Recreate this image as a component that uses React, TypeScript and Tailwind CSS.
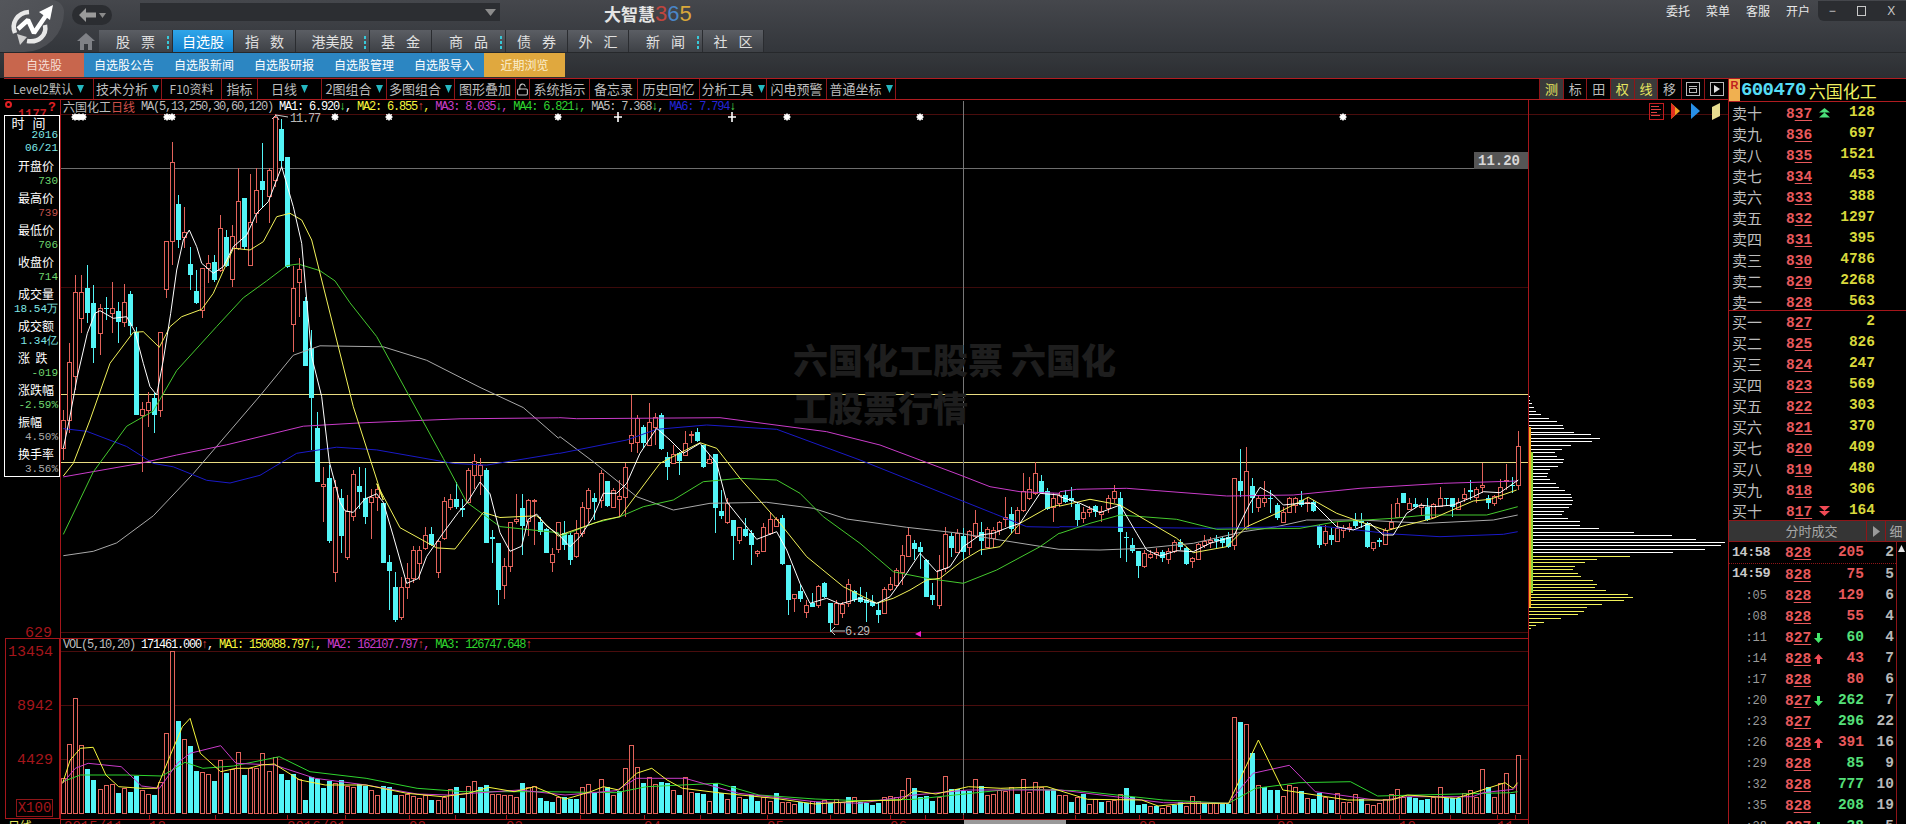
import { LockOpen } from "lucide-react";

type Pt = [number, number];
const pts = (ox: number, oy: number, sx: number, sy: number, a: number[]): Pt[] => {
  const out: Pt[] = [];
  for (let i = 0; i < a.length; i += 2) out.push([ox + a[i] / sx, oy + a[i + 1] / sy]);
  return out;
};
const line = (...parts: Pt[][]) => parts.flat().map((p) => `${p[0].toFixed(1)},${p[1].toFixed(1)}`).join(" ");

const Z3 = (a: number[]) => pts(0, 100, 3, 3, a);
const Z7 = (a: number[]) => pts(60, 100, 3, 2.958, a);
const Z8 = (a: number[]) => pts(560, 320, 3, 3, a);
const Z9 = (a: number[]) => pts(1060, 400, 3, 3, a);
const V1 = (a: number[]) => pts(60, 640, 1.96, 3, a);
const V2 = (a: number[]) => pts(860, 640, 1.845, 3, a);

const priceLines = [
  { c: "#a9a9a9", p: line(
    Z7([10,1348,100,1335,170,1310,280,1230,400,1105,600,875,700,755,780,727,970,730,1100,770,1260,850,1390,910,1495,1000]),
    Z8([0,350,100,425,230,530,340,570,450,550,620,547,760,565,860,597,1040,622,1200,640,1320,660,1497,688]),
    Z9([0,448,120,450,250,445,400,430,550,395,650,380,740,360,900,360,1100,370,1300,360,1373,345])) },
  { c: "#1a1ac8", p: line(
    Z7([10,972,80,980,200,1025,280,1075,340,1085,440,1125,510,1133,600,1110,710,1045,830,1027,950,1035,1180,1075,1280,1080,1495,1045]),
    Z8([0,400,200,360,290,328,440,315,650,328,900,420,1200,540,1300,580,1400,620,1497,622]),
    Z9([0,380,460,385,780,378,1000,402,1140,410,1330,403,1373,395])) },
  { c: "#c93cc9", p: line(
    Z7([10,1115,240,1075,350,1050,500,1020,730,965,900,955,1200,943,1495,940]),
    Z8([0,293,50,296,480,293,800,335,960,375,1200,465,1290,500,1380,515,1497,520]),
    Z9([0,275,50,268,200,265,500,288,700,285,900,265,1150,250,1373,243])) },
  { c: "#45c92e", p: line(
    Z7([10,1285,100,1100,200,965,280,920,350,800,470,670,550,585,620,535,680,490,715,485,780,505,825,535,870,600,950,700,1050,880,1150,1060,1220,1190,1320,1262,1495,1280]),
    Z8([0,650,100,610,180,590,250,560,340,540,430,485,540,475,650,480,720,520,790,590,900,670,1000,755,1100,775,1210,790,1310,750,1440,680,1497,640]),
    Z9([0,400,90,370,180,345,350,358,470,388,720,385,830,365,1000,355,1100,345,1280,345,1373,320])) },
  { c: "#f2f25a", p: line(
    Z3([190,1128,220,1090,270,960,330,790,400,697,430,695,478,742,510,680,545,650,605,628,640,580,700,445,750,450,790,425,830,350,870,340,905,360,935,420,980,600,1060,920,1150,1200]),
    Z7([950,1135,1020,1265,1130,1325,1185,1328,1270,1220,1320,1235,1430,1230,1495,1290]),
    Z8([0,645,130,600,180,590,240,510,300,430,420,368,470,385,540,475,660,610,740,710,850,800,950,850,1000,835,1050,810,1100,780,1140,775,1210,720,1260,690,1320,680,1380,610,1460,565,1497,555]),
    Z9([0,318,90,298,180,315,350,415,400,458,500,440,560,380,650,340,745,292,830,340,900,365,980,392,1040,375,1120,355,1200,320,1240,303,1290,298,1370,270])) },
  { c: "#ffffff", p: line(
    Z3([190,1045,208,960,232,830,262,700,285,640,300,632,340,655,380,650,405,695,430,790,450,860,470,885,490,780,512,640,530,510,550,420,568,390,590,440,605,490,640,520,670,500,700,440,740,405,770,340,805,305,845,200,880,320,905,430,935,770,965,890]),
    Z7([808,1070,840,1190,855,1215,880,1220,915,1180,950,1165,970,1190,1000,1290,1040,1430,1075,1415,1100,1350,1150,1280,1195,1220,1222,1190,1260,1130,1290,1165,1320,1280,1350,1335,1385,1320,1405,1240,1430,1225,1460,1260,1495,1285]),
    Z8([30,680,60,650,100,590,130,520,170,520,200,490,240,400,290,325,330,360,370,400,420,370,470,430,500,545,540,595,590,658,650,635,680,690,720,790,750,850,800,835,840,852,900,835,950,850,990,830,1040,760,1080,700,1130,755,1170,740,1210,680,1260,645,1300,640,1350,620,1380,610,1440,520,1497,525]),
    Z9([0,290,60,310,120,338,180,315,230,400,260,450,300,468,350,452,400,455,450,430,520,410,570,310,600,262,640,285,670,315,720,310,760,310,830,380,880,390,930,370,970,405,1000,405,1040,340,1080,315,1120,320,1180,315,1240,290,1270,275,1320,278,1375,240])) },
];

const volLines = [
  { c: "#2fd52f", p: line(
    V1([5,425,40,405,130,405,200,408,245,367,280,385,340,378,430,350,490,395,600,415,700,445,790,455,950,455,1090,458,1150,440,1290,430,1370,465,1480,477,1568,482]),
    V2([100,478,280,447,400,452,560,480,680,490,730,445,810,428,905,425,955,468,1200,458,1213,455])) },
  { c: "#c93cc9", p: line(
    V1([5,430,30,385,55,370,120,380,160,438,195,445,230,370,255,340,315,317,345,370,420,375,500,415,600,435,700,462,760,465,900,450,990,465,1090,452,1130,415,1225,415,1330,460,1480,485,1568,490]),
    V2([100,465,200,450,370,450,560,488,680,490,725,400,792,376,840,455,960,482,1010,470,1130,470,1150,458,1205,448,1213,435])) },
  { c: "#f6f63c", p: line(
    V1([5,430,20,360,40,325,65,322,90,405,115,440,160,445,190,445,215,350,240,260,255,235,275,340,315,395,345,385,370,385,395,375,420,372,470,420,520,435,600,435,680,460,750,470,800,460,840,442,890,455,930,440,990,478,1040,455,1065,440,1095,450,1130,400,1160,385,1190,420,1220,445,1300,460,1400,475,1480,492,1568,483]),
    V2([75,480,100,452,140,462,200,440,260,445,345,440,420,478,520,480,550,498,600,490,680,490,735,300,780,450,900,480,980,480,1010,465,1100,475,1190,428,1205,445,1213,428])) },
];

// [1=red 0=cyan, body top, body bottom, high, low]
const C: [number, number, number, number, number][] = [
  [1,420,448,410,460],[1,362,420,343,433],[1,292,376,275,390],[1,292,318,275,333],[0,288,313,265,323],[0,303,348,285,363],
  [1,308,333,304,355],[0,308,309,297,320],[1,308,313,282,333],[0,311,322,302,343],[1,302,322,284,327],[0,294,326,291,335],
  [0,332,415,327,415],[1,409,415,402,472],[1,402,410,392,427],[0,398,415,393,433],[1,332,410,332,417],[1,241,289,241,298],
  [1,162,241,142,265],[0,204,240,195,248],[1,232,237,207,248],[0,264,275,247,290],[0,291,303,270,304],[1,268,310,268,318],
  [1,263,268,255,283],[0,262,280,255,282],[1,228,270,215,272],[0,237,266,230,267],[1,236,279,225,287],[1,201,248,168,250],
  [0,198,247,198,250],[1,222,265,174,266],[1,190,213,168,223],[0,181,190,143,207],[1,170,196,168,223],[1,117,180,114,187],
  [0,129,161,119,167],[0,157,267,157,268],[1,288,324,266,352],[1,269,282,258,317],[0,301,366,297,366],[0,348,398,330,450],
  [0,428,482,412,482],[1,484,486,467,522],[0,478,541,465,543],[1,487,572,480,582],[0,498,536,489,553],[1,511,557,495,560],
  [1,474,516,470,521],[0,486,492,467,509],[0,498,517,468,524],[1,497,502,489,539],[1,489,497,484,511],[0,503,563,503,563],
  [0,562,571,555,610],[0,587,620,572,622],[1,587,617,577,620],[1,578,587,563,599],[1,550,578,546,583],[1,550,563,546,580],
  [1,535,548,527,550],[0,534,545,527,546],[1,541,572,539,578],[1,501,538,497,540],[1,499,507,494,510],[0,499,507,482,509],
  [0,508,510,499,517],[1,470,502,468,504],[1,461,475,454,489],[1,465,475,458,495],[0,470,543,468,543],[0,537,539,530,563],
  [0,543,590,543,605],[1,566,585,558,599],[1,522,566,522,572],[1,519,521,494,524],[0,508,526,494,555],[1,500,521,499,536],
  [1,500,501,499,545],[0,522,532,517,535],[0,529,553,528,553],[1,554,562,548,572],[1,522,549,522,553],[0,533,545,521,550],
  [0,535,560,533,565],[1,533,556,520,558],[1,507,533,502,537],[1,490,508,488,523],[0,498,502,493,520],[1,473,500,470,508],
  [0,481,506,481,507],[1,490,507,488,508],[1,496,499,480,517],[1,467,497,463,517],[1,435,443,395,452],[1,418,442,415,453],
  [0,427,443,425,448],[1,422,445,403,446],[1,417,427,413,445],[0,415,449,413,450],[0,457,467,452,480],[1,454,463,445,463],
  [0,453,461,452,475],[1,443,455,431,455],[1,434,435,431,443],[0,432,441,428,442],[0,445,467,445,468],[1,459,463,455,464],
  [0,454,508,454,533],[0,511,516,490,519],[1,503,522,498,524],[0,520,536,520,560],[1,527,540,527,544],[0,529,536,518,537],
  [0,533,545,530,565],[1,551,553,550,557],[1,527,551,523,552],[1,519,533,512,535],[1,519,526,517,527],[0,518,564,515,565],
  [0,565,600,565,615],[1,594,598,594,612],[0,591,599,585,602],[1,605,612,600,618],[0,603,607,593,607],[1,586,605,585,608],
  [0,583,597,582,598],[0,603,623,603,632],[1,603,624,600,625],[1,604,613,602,618],[1,584,603,579,607],[0,591,600,590,602],
  [0,597,602,587,603],[0,600,603,592,622],[0,602,606,595,607],[0,610,615,602,623],[1,589,613,587,613],[1,584,589,577,591],
  [1,570,585,568,587],[1,555,572,545,585],[1,535,556,527,557],[0,543,549,540,560],[0,547,552,542,569],[0,560,597,559,597],
  [0,595,600,583,605],[1,570,605,555,609],[1,534,568,527,572],[0,536,548,533,557],[1,533,552,529,553],[0,536,552,528,560],
  [1,531,547,530,555],[1,523,536,510,538],[0,532,541,522,555],[1,529,547,527,548],[1,530,538,527,548],[1,522,530,521,535],
  [1,517,519,497,527],[0,514,529,507,533],[1,510,533,507,534],[1,491,510,473,512],[1,489,498,477,500],[1,473,493,462,495],
  [0,481,493,475,493],[0,491,509,488,510],[1,498,507,493,522],[1,495,503,493,507],[0,495,502,490,503],[0,498,501,487,507],
  [0,504,520,503,526],[1,512,518,507,523],[1,509,512,506,517],[0,506,512,505,517],[1,511,514,506,522],[1,498,508,495,513],
  [1,491,498,485,503],[0,498,532,492,558],[0,537,538,532,562],[0,545,551,538,553],[0,551,566,551,578],[1,553,566,550,568],
  [1,554,557,550,559],[1,552,554,548,559],[0,552,558,550,562],[1,551,559,548,564],[1,542,551,540,553],[0,542,547,539,550],
  [0,548,564,547,565],[1,558,561,557,568],[1,544,559,543,560],[1,541,545,535,548],[1,540,542,537,548],[0,539,541,535,548],
  [0,538,543,537,548],[0,537,547,532,548],[1,478,545,478,550],[0,481,491,449,497],[1,471,528,447,530],[0,486,498,478,513],
  [1,498,507,495,512],[1,498,502,481,507],[0,498,499,490,513],[0,505,518,503,520],[1,512,522,507,523],[1,498,512,497,513],
  [1,498,505,497,513],[0,500,505,491,507],[1,502,503,497,512],[0,502,511,500,512],[0,526,545,525,548],[1,531,543,525,546],
  [0,535,540,528,545],[1,528,541,522,542],[1,528,530,525,538],[1,527,528,523,532],[0,520,526,513,528],[0,521,523,513,528],
  [0,523,547,522,548],[1,542,548,542,551],[0,540,542,538,547],[1,530,544,528,545],[1,522,528,504,530],[1,503,517,498,518],
  [0,493,503,493,503],[1,503,509,498,510],[0,504,507,498,508],[1,505,507,503,515],[0,507,520,498,521],[1,504,517,503,518],
  [1,498,506,487,507],[0,498,499,498,506],[0,498,507,498,517],[1,502,509,498,510],[1,494,498,488,502],[0,490,492,480,500],
  [1,489,497,487,503],[1,485,487,463,493],[0,498,503,495,509],[1,496,503,495,506],[1,487,498,479,500],[1,480,481,464,490],
  [0,485,486,477,493],[1,446,485,431,490],
];

const volTop = [778,744,698,745,-769,-780,789,785,784,-793,788,-792,-776,790,794,-795,782,733,651,-721,739,-746,-771,772,774,-781,760,-773,769,752,-775,768,768,753,771,757,-774,-780,-774,779,-800,-777,-779,-788,-781,783,-780,786,787,-784,-786,790,795,-786,-787,-795,795,794,796,798,795,-800,800,797,789,-787,-798,786,781,-787,-785,794];
const volZoom = [
  462,465,465,470,-430,440,438,-475,-482,-487,470,-472,-478,-478,440,432,-460,418,-440,465,
  -452,385,316,382,-430,412,433,-425,-430,450,-465,412,457,-458,-462,484,-430,-458,478,-438,472,-478,-465,-483,
  472,482,-460,487,487,493,-487,-490,483,-487,480,-490,478,485,-472,470,
  -485,-490,-495,-490,472,468,472,450,415,-445,-470,-468,-483,470,408,-448,-448,-452,-453,418,
  -438,465,462,450,452,440,-462,418,455,427,442,-450,-448,465,465,-487,470,-463,492,478,
  -485,482,480,462,-445,-470,-495,-491,498,-497,505,498,-495,-485,497,468,482,-490,490,488,
  -492,-492,232,-246,253,-338,435,-442,-450,-450,468,435,442,-452,475,-477,-458,470,-480,460,
  485,487,463,-478,492,495,490,478,462,448,470,-470,-475,-480,-478,470,442,-475,-475,-475,460,450,470,388,-442,472,430,400,-462,346,
];
const vols = [
  ...volTop,
  ...volZoom.map((y) => (y < 0 ? -(640 + -y / 3) : 640 + y / 3)),
].slice(0, 242);

const candleX = (i: number) => Math.round(63.3 + 6.036 * i) + 0.5;

const stars = [75, 79, 83, 167, 172, 335, 389, 558, 787, 920, 1343];
const crosses = [618, 732];
const dateLabels: [number, string][] = [[64, "2015/11"], [149, "12"], [287, "2016/01"], [409, "02"], [506, "03"], [644, "04"], [767, "05"], [890, "06"], [1139, "08"], [1277, "09"], [1399, "10"], [1497, "11"]];
const dateTicks = [149, 215, 287, 345, 409, 455, 506, 580, 644, 700, 767, 830, 890, 925, 963, 1075, 1139, 1200, 1277, 1340, 1399, 1450, 1497, 1515];

function Chart() {
  return (
    <svg width={1467} height={724} viewBox="61 100 1467 724" className="block">
      <g shapeRendering="crispEdges">
        <line x1={61} x2={1528} y1={114.5} y2={114.5} stroke="#4a0d0d" />
        <line x1={61} x2={1528} y1={287.5} y2={287.5} stroke="#3c0a0a" />
        <line x1={61} x2={1528} y1={632.5} y2={632.5} stroke="#4a0d0d" />
        <line x1={61} x2={1528} y1={651.5} y2={651.5} stroke="#4a0d0d" />
        <line x1={61} x2={1528} y1={705.5} y2={705.5} stroke="#4a0d0d" />
        <line x1={61} x2={1528} y1={759.5} y2={759.5} stroke="#4a0d0d" />
      </g>
      <g shapeRendering="crispEdges">
        <line x1={61} x2={1528} y1={168.5} y2={168.5} stroke="#6e6e6e" />
        <line x1={61} x2={1528} y1={394.5} y2={394.5} stroke="#e9dc82" />
        <line x1={61} x2={1528} y1={462.5} y2={462.5} stroke="#e9dc82" />
        <line x1={963.5} x2={963.5} y1={101} y2={819} stroke="#777" />
        <line x1={61} x2={1528} y1={638.5} y2={638.5} stroke="#a5161b" />
        <line x1={61} x2={1528} y1={819.5} y2={819.5} stroke="#a5161b" />
        {dateTicks.map((x) => <line key={x} x1={x + 0.5} x2={x + 0.5} y1={815} y2={819} stroke="#a5161b" />)}
      </g>
      <g shapeRendering="crispEdges">
        {C.map((c, i) => {
          const x = candleX(i);
          const col = c[0] ? "#e2635b" : "#53f5f7";
          return (
            <g key={i}>
              <line x1={x} x2={x} y1={c[3]} y2={c[4]} stroke={col} />
              {c[0] ? (
                <rect x={x - 2} y={c[1] + 0.5} width={4} height={Math.max(c[2] - c[1], 1)} fill="#000" stroke={col} />
              ) : (
                <rect x={x - 2.5} y={c[1]} width={5} height={Math.max(c[2] - c[1], 1)} fill={col} />
              )}
            </g>
          );
        })}
        {vols.map((v, i) => {
          const x = candleX(i);
          const top = Math.round(Math.abs(v));
          return v > 0 ? (
            <rect key={i} x={x - 2} y={top + 0.5} width={4} height={813 - top} fill="#000" stroke="#e2635b" />
          ) : (
            <rect key={i} x={x - 2.5} y={top} width={5} height={813 - top} fill="#53f5f7" />
          );
        })}
      </g>
      <g fill="none" strokeLinejoin="round">
        {priceLines.map((l) => <polyline key={l.c} points={l.p} stroke={l.c} strokeWidth={1} />)}
        {volLines.map((l) => <polyline key={l.c} points={l.p} stroke={l.c} strokeWidth={1} />)}
      </g>
      <g fill="#fff">
        {stars.map((x) => (
          <g key={x}>
            <circle cx={x} cy={117} r={3} />
            <path d={`M${x - 4} 117H${x + 4}M${x} 113V121M${x - 3} 114L${x + 3} 120M${x + 3} 114L${x - 3} 120`} stroke="#fff" strokeWidth={0.8} />
          </g>
        ))}
        {crosses.map((x) => <path key={x} d={`M${x - 4} 117H${x + 4}M${x} 112V122`} stroke="#fff" strokeWidth={1.6} />)}
      </g>
      <path d="M288 117L276 115L272 119M276 115L279 120" stroke="#c9c9c9" fill="none" />
      <text x={290} y={122} fill="#b9b9b9" fontFamily="'Liberation Mono', monospace" fontSize={12} letterSpacing={-1.2}>11.77</text>
      <path d="M845 631H831M835 627L831 631L835 635" stroke="#c9c9c9" fill="none" />
      <text x={845} y={635} fill="#b9b9b9" fontFamily="'Liberation Mono', monospace" fontSize={12} letterSpacing={-1.2}>6.29</text>
      <polygon points="915,634 921,631 921,637" fill="#ee22cc" />
      <rect x={1474} y={152} width={54} height={17} fill="#555" />
      <text x={1478} y={165} fill="#d8d8d8" fontFamily="'Liberation Mono', monospace" fontSize={14} fontWeight={700}>11.20</text>
      <g fontFamily="'Liberation Mono', monospace" fontSize={14} fill="#a5161b">
        {dateLabels.map(([x, t]) => <text key={t} x={x} y={831}>{t}</text>)}
      </g>
      <rect x={964} y={820} width={102} height={4} fill="#999" />
    </svg>
  );
}

const profile: [number, number][] = [
  [48,390],[60,390],[70,395],[82,402],[92,408],[103,422],[113,447],[124,470],[134,489],[144,491],[155,522],[163,573],[175,600],[184,576],[196,513],[206,486],[217,466],[227,471],[238,491],[247,489],[259,474],[268,450],[278,444],[289,441],[298,450],[310,468],[320,477],[331,495],[341,513],[352,516],[361,519],[372,516],[382,507],[392,492],[403,486],[413,504],[424,540],[434,540],[445,597],[455,702],[466,816],[476,888],[487,975],[496,963],[508,915],[517,819],
  [527,690],[538,591],[547,555],[559,525],[568,519],[579,534],[589,543],[600,579],[611,591],[622,585],[631,618],[641,684],[652,699],[661,672],[672,606],[682,561],[694,552],[703,534],[715,483],[725,432],[736,408],[745,393],
];

function Profile() {
  return (
    <svg width={199} height={724} viewBox="1529 100 199 724" className="block">
      <g shapeRendering="crispEdges">
        <line x1={1529} x2={1728} y1={114.5} y2={114.5} stroke="#4a0d0d" />
        {profile.map(([y, x], i) => (
          <line key={y} x1={1529} x2={1400 + x / 3} y1={Math.round(380 + y / 3) + 0.5} y2={Math.round(380 + y / 3) + 0.5} stroke={i < 46 ? "#ffffff" : "#f2f25a"} />
        ))}
        <rect x={1529} y={427} width={2} height={180} fill="#f5a81c" />
        <rect x={1531} y={452} width={2} height={141} fill="#8fd83a" />
        <rect x={1649.5} y={103.5} width={14} height={16} fill="none" stroke="#c01c20" />
        <path d="M1651 106.5h8M1651 109.5h10M1651 112.5h6M1651 115.5h9" stroke="#e04040" />
      </g>
      <polygon points="1671,103 1680,111 1671,119" fill="#f0a020" />
      <polygon points="1671,103 1675,107 1675,115 1671,119" fill="#e03020" />
      <polygon points="1691,103 1700,111 1691,119" fill="#2890e8" />
      <polygon points="1712,107 1720,103 1720,116 1712,120" fill="#e8dc90" />
    </svg>
  );
}

const tabs = [
  { t: "股票", w: 74, dots: true, sp: true },
  { t: "自选股", w: 61, active: true },
  { t: "指数", w: 62, sp: true },
  { t: "港美股", w: 74, dots: true },
  { t: "基金", w: 62, sp: true },
  { t: "商品", w: 74, dots: true, sp: true },
  { t: "债券", w: 62, sp: true },
  { t: "外汇", w: 61, sp: true },
  { t: "新闻", w: 74, dots: true, sp: true },
  { t: "社区", w: 61, sp: true },
];

const tools = [
  { t: "Level2默认", w: 90, arrow: true, mono: true },
  { t: "技术分析", w: 68, arrow: true },
  { t: "F10资料", w: 60, mono: true },
  { t: "指标", w: 36 },
  { t: "日线", w: 64, arrow: true },
  { t: "2图组合", w: 65, arrow: true },
  { t: "多图组合", w: 68, arrow: true },
  { t: "图形叠加", w: 61 },
  { t: "lock", w: 14 },
  { t: "系统指示", w: 60 },
  { t: "备忘录", w: 48 },
  { t: "历史回忆", w: 62 },
  { t: "分析工具", w: 67, arrow: true },
  { t: "闪电预警", w: 60 },
  { t: "普通坐标", w: 69, arrow: true },
];

const rightTools = [
  { t: "测", on: true }, { t: "标" }, { t: "田" }, { t: "权", on: true }, { t: "线", on: true }, { t: "移" }, { t: "box" }, { t: "play" },
];

const info: [string, string, string][] = [
  ["开盘价", "730", "text-[#6fd66f]"],
  ["最高价", "739", "text-[#c0504a]"],
  ["最低价", "706", "text-[#6fd66f]"],
  ["收盘价", "714", "text-[#6fd66f]"],
  ["成交量", "18.54万", "text-[#7fe8e8]"],
  ["成交额", "1.34亿", "text-[#7fe8e8]"],
  ["涨  跌", "-019", "text-[#6fd66f]"],
  ["涨跌幅", "-2.59%", "text-[#6fd66f]"],
  ["振幅", "4.50%", "text-[#aaaaaa]"],
  ["换手率", "3.56%", "text-[#aaaaaa]"],
];

const asks: [string, string, string][] = [["卖十","837","128"],["卖九","836","697"],["卖八","835","1521"],["卖七","834","453"],["卖六","833","388"],["卖五","832","1297"],["卖四","831","395"],["卖三","830","4786"],["卖二","829","2268"],["卖一","828","563"]];
const bids: [string, string, string][] = [["买一","827","2"],["买二","825","826"],["买三","824","247"],["买四","823","569"],["买五","822","303"],["买六","821","370"],["买七","820","409"],["买八","819","480"],["买九","818","306"],["买十","817","164"]];

const trades: { t: string; p: string; a?: "u" | "d"; v: string; g?: boolean; n: string; big?: boolean }[] = [
  { t: "14:58", p: "828", v: "205", n: "2", big: true },
  { t: "14:59", p: "828", v: "75", n: "5", big: true },
  { t: ":05", p: "828", v: "129", n: "6" },
  { t: ":08", p: "828", v: "55", n: "4" },
  { t: ":11", p: "827", a: "d", v: "60", g: true, n: "4" },
  { t: ":14", p: "828", a: "u", v: "43", n: "7" },
  { t: ":17", p: "828", v: "80", n: "6" },
  { t: ":20", p: "827", a: "d", v: "262", g: true, n: "7" },
  { t: ":23", p: "827", v: "296", g: true, n: "22" },
  { t: ":26", p: "828", a: "u", v: "391", n: "16" },
  { t: ":29", p: "828", v: "85", g: true, n: "9" },
  { t: ":32", p: "828", v: "777", g: true, n: "10" },
  { t: ":35", p: "828", v: "208", g: true, n: "19" },
  { t: ":38", p: "827", a: "d", v: "38", g: true, n: "5" },
];

const mono = "font-['Liberation_Mono',monospace]";
const cjk = "font-['Noto_Sans_CJK_SC','Noto_Sans',sans-serif]";

function Price({ p }: { p: string }) {
  return (
    <span className={`${mono} text-[14.5px] font-bold text-[#e8595c]`}>
      {p[0]}
      <span className="underline underline-offset-2">{p.slice(1)}</span>
    </span>
  );
}

function BookRow({ r, arrow }: { r: [string, string, string]; arrow?: "u" | "d" }) {
  return (
    <div className="flex h-[21px] shrink-0 items-center pl-[3px]">
      <span className={`w-[54px] text-[15px] leading-none text-[#bdbdbd] ${cjk}`}>{r[0]}</span>
      <span className="w-[27px]"><Price p={r[1]} /></span>
      <span className="flex w-[20px] justify-center pl-[2px]">
        {arrow === "u" && (
          <svg width={11} height={10} viewBox="0 0 11 10"><path d="M5.5 0L11 4.5H0zM5.5 4.5L11 9.5H0z" fill="#4be07a" /></svg>
        )}
        {arrow === "d" && (
          <svg width={11} height={10} viewBox="0 0 11 10"><path d="M5.5 5L0 0H11zM5.5 10L0 5H11z" fill="#f04a55" /></svg>
        )}
      </span>
      <span className={`w-[42px] text-right text-[14.5px] font-bold text-[#d8d83c] ${mono}`}>{r[2]}</span>
    </div>
  );
}

function App() {
  return (
    <div className={`flex h-[824px] w-[1906px] flex-col overflow-hidden bg-black ${cjk}`}>
      {/* top chrome */}
      <div className="flex h-[52px] shrink-0 bg-gradient-to-b from-[#45474c] to-[#33363b]">
        <div className="flex h-[52px] w-[64px] shrink-0 items-center justify-center rounded-br-[52px] rounded-tr-[16px] bg-gradient-to-br from-[#54565b] to-[#4a4c51]">
          <svg width={46} height={42} viewBox="0 0 46 42" fill="none">
            <path d="M6 28C2 18 8 8 20 7" stroke="#e8e8e8" strokeWidth={4.5} />
            <path d="M36 20C38 30 30 38 18 36" stroke="#e8e8e8" strokeWidth={4.5} />
            <path d="M9 24L19 15L25 28L38 9" stroke="#fff" strokeWidth={4.5} strokeLinejoin="bevel" />
            <polygon points="44,0 41,15 30,7" fill="#fff" />
            <polygon points="18,32 11,40 8,29" fill="#cfcfcf" />
          </svg>
        </div>
        <div className="flex min-w-0 flex-1 flex-col">
          <div className="relative flex h-[30px] items-start">
            <div className="ml-[8px] mt-[5px] flex h-[20px] w-[40px] items-center justify-center gap-[3px] rounded-full bg-[#2b2d31]">
              <svg width={17} height={14} viewBox="0 0 17 14"><path d="M7 0L0 7l7 7V9.5h10v-5H7z" fill="#9a9a9a" /></svg>
              <svg width={7} height={5} viewBox="0 0 7 5"><path d="M0 0h7L3.5 5z" fill="#8a8a8a" /></svg>
            </div>
            <div className="ml-[28px] mt-[3px] flex h-[18px] w-[360px] items-center justify-end bg-[#2c2e32] pr-[4px]">
              <svg width={11} height={7} viewBox="0 0 11 7"><path d="M0 0h11L5.5 7z" fill="#8c8c8c" /></svg>
            </div>
            <div className="ml-[104px] mt-[3px] flex items-center">
              <span className="text-[17px] font-bold leading-[22px] text-[#e4e4e4]">大智慧</span>
              <span className="font-['Liberation_Sans',sans-serif] text-[22px] leading-[22px]">
                <span className="text-[#c0453e]">3</span>
                <span className="text-[#4a86c8]">6</span>
                <span className="text-[#d9a83a]">5</span>
              </span>
            </div>
            <div className="ml-auto flex h-[22px] items-center">
              <div className="flex gap-[16px] pr-[8px] text-[12px] leading-none text-[#e8e8e8]">
                <span>委托</span>
                <span>菜单</span>
                <span>客服</span>
                <span>开户</span>
              </div>
              <div className="flex h-[20px] w-[88px] items-center justify-around rounded-bl-[6px] bg-[#2b2d31] font-['Liberation_Sans',sans-serif] text-[12px] text-[#c8c8c8]">
                <span>−</span>
                <span className="h-[10px] w-[9px] border border-[#c8c8c8]" />
                <span>X</span>
              </div>
            </div>
          </div>
          <div className="flex h-[22px]">
            <div className="flex w-[35px] items-end justify-center pb-[2px] pl-[8px]">
              <svg width={18} height={17} viewBox="0 0 18 17"><path d="M9 0L0 8h3v9h4v-6h4v6h4V8h3z" fill="#7f8186" /></svg>
            </div>
            {tabs.map((t) => (
              <div
                key={t.t}
                style={{ width: t.w }}
                className={`relative flex items-center justify-center border-r border-[#2a2c30] text-[14px] leading-none ${t.active ? "bg-gradient-to-b from-[#2fa6ea] to-[#0f7fcb] text-white" : "bg-gradient-to-b from-[#5b5e64] to-[#3e4146] text-[#e0e0e0]"} ${t.sp ? "gap-[11px]" : ""}`}
              >
                {t.sp ? t.t.split("").map((c) => <span key={c}>{c}</span>) : t.t}
                {t.dots && (
                  <span className="absolute right-[3px] top-[6px] flex flex-col gap-[2px]">
                    <span className="h-[3px] w-[2px] bg-[#38c8d8]" />
                    <span className="h-[3px] w-[2px] bg-[#38c8d8]" />
                    <span className="h-[3px] w-[2px] bg-[#38c8d8]" />
                  </span>
                )}
              </div>
            ))}
          </div>
        </div>
      </div>

      {/* sub tabs */}
      <div className="flex h-[26px] shrink-0 items-start border-t border-[#26282b] bg-gradient-to-b from-[#35383c] to-[#2c2e32] pl-[4px] text-[12px] leading-[24px] text-white">
        <span className="h-[24px] w-[80px] bg-[#c8664d] text-center text-[#f5dcd2]">自选股</span>
        <div className="flex h-[24px] w-[400px] bg-[#2c86c2]">
          {["自选股公告", "自选股新闻", "自选股研报", "自选股管理", "自选股导入"].map((t) => (
            <span key={t} className="w-[80px] text-center">{t}</span>
          ))}
        </div>
        <span className="h-[24px] w-[81px] bg-[#e0a83e] text-center text-[#fbeecd]">近期浏览</span>
      </div>

      {/* toolbar + body */}
      <div className="flex min-h-0 flex-1">
        <div className="flex w-[1728px] shrink-0 flex-col">
          <div className="ml-[4px] flex h-[22px] shrink-0 items-center border-y border-[#b01c20] text-[13px] text-[#bcbcbc]">
            {tools.map((t) => (
              <div key={t.t} style={{ width: t.w }} className="flex h-full shrink-0 items-center justify-center gap-[4px] border-r border-[#8e1518]">
                {t.t === "lock" ? (
                  <LockOpen size={13} color="#c8c8c8" />
                ) : (
                  <span className={`whitespace-nowrap ${t.mono ? "text-[12px]" : ""}`}>{t.t}</span>
                )}
                {t.arrow && (
                  <svg width={7} height={8} viewBox="0 0 7 8"><path d="M0 0h7L3.5 8z" fill="#25b8c0" /></svg>
                )}
              </div>
            ))}
            <div className="ml-auto flex h-full">
              {rightTools.map((t) => (
                <div key={t.t} className={`flex h-full w-[23.6px] items-center justify-center border-l border-[#8e1518] text-[13px] ${t.on ? "bg-[#3a3a3a] text-[#e8e860]" : "text-[#bcbcbc]"}`}>
                  {t.t === "play" && (
                    <span className="flex h-[14px] w-[14px] items-center justify-center border border-[#bbb]">
                      <svg width={6} height={8} viewBox="0 0 6 8"><path d="M0 0l6 4-6 4z" fill="#ddd" /></svg>
                    </span>
                  )}
                  {t.t === "box" && (
                    <span className="flex h-[14px] w-[14px] flex-col items-center justify-center gap-[1px] border border-[#bbb]">
                      <span className="h-[1px] w-[8px] bg-[#bbb]" />
                      <span className="h-[5px] w-[8px] border border-[#bbb]" />
                    </span>
                  )}
                  {t.t !== "play" && t.t !== "box" && t.t}
                </div>
              ))}
            </div>
          </div>

          <div className="flex min-h-0 flex-1">
            {/* left axis */}
            <div className="flex w-[60px] shrink-0 flex-col">
              <div className="relative h-[15px] overflow-hidden">
                <span className={`absolute left-[18px] top-[9px] text-[12px] font-bold leading-[12px] text-[#c01c20] ${mono}`}>1177</span>
                <span className="absolute left-[5px] top-[1px] h-[7px] w-[7px] rounded-full border-2 border-[#e02024]" />
                <span className={`absolute left-[48px] top-[1px] text-[13px] font-bold leading-[13px] text-[#e02024] ${mono}`}>?</span>
              </div>
              <div className="ml-[4px] flex h-[362px] w-[56px] shrink-0 flex-col border border-white pr-[1px] text-[12px] text-white">
                <div className="flex h-[18px] items-center justify-center gap-[8px] pr-[6px] text-[13px] leading-none">
                  <span>时</span>
                  <span>间</span>
                </div>
                <div className={`h-[13px] text-right text-[11px] leading-[13px] text-[#7fe8e8] ${mono}`}>2016</div>
                <div className={`mb-[3px] h-[13px] text-right text-[11px] leading-[13px] text-[#7fe8e8] ${mono}`}>06/21</div>
                {info.map(([l, v, c]) => (
                  <div key={l} className="h-[32px] shrink-0">
                    <div className="h-[16px] whitespace-pre pl-[13px] text-[12px] leading-[16px]">{l}</div>
                    <div className={`h-[14px] whitespace-nowrap text-right text-[11px] leading-[14px] ${c} ${mono}`}>{v}</div>
                  </div>
                ))}
              </div>
              <div className={`mt-auto h-[14px] pr-[8px] text-right text-[15px] leading-[20px] text-[#a5161b] ${mono}`}>629</div>
              <div className={`ml-[5px] flex h-[181px] shrink-0 flex-col items-end border border-[#a5161b] pr-[6px] pt-[5px] text-[15px] text-[#a5161b] ${mono}`}>
                <span className="h-[18px] leading-[18px]">13454</span>
                <span className="mt-[36px] h-[18px] leading-[18px]">8942</span>
                <span className="mt-[36px] h-[18px] leading-[18px]">4429</span>
                <span className="mt-[29px] flex h-[18px] w-[37px] items-center justify-center self-end border border-[#8e1518] text-[14px] leading-none">X100</span>
              </div>
              <div className="h-[5px] overflow-hidden pl-[8px] text-[12px] leading-[14px] text-[#e8e860]">日线</div>
            </div>

            {/* chart */}
            <div className="relative w-[1469px] shrink-0 border-x border-[#a5161b]">
              <Chart />
              <div className={`absolute left-[2px] top-0 flex h-[14px] items-center whitespace-pre text-[12px] leading-none tracking-[-1.2px] ${mono}`}>
                <span className={`tracking-normal text-[#bdbdbd] ${cjk}`}>六国化工</span>
                <span className={`tracking-normal text-[#d0504a] ${cjk}`}>日线</span>
                <span className="ml-[6px] text-[#bdbdbd]">MA(5,13,250,30,60,120) </span>
                <span className="text-white">MA1: 6.920<span className="text-[#55e055]">↓</span>, </span>
                <span className="text-[#f6f63c]">MA2: 6.855<span className="text-[#e04040]">↑</span>, </span>
                <span className="text-[#c93cc9]">MA3: 8.035<span className="text-[#55e055]">↓</span>, </span>
                <span className="text-[#2fd52f]">MA4: 6.821<span className="text-[#55e055]">↓</span>, </span>
                <span className="text-[#bdbdbd]">MA5: 7.368<span className="text-[#55e055]">↓</span>, </span>
                <span className="text-[#2424d8]">MA6: 7.794<span className="text-[#55e055]">↓</span></span>
              </div>
              <div className={`absolute left-[2px] top-[538px] flex h-[14px] items-center whitespace-pre text-[12px] leading-none tracking-[-1.2px] ${mono}`}>
                <span className="text-[#bdbdbd]">VOL(5,10,20) </span>
                <span className="text-white">171461.000<span className="text-[#e04040]">↑</span>, </span>
                <span className="text-[#f6f63c]">MA1: 150088.797<span className="text-[#55e055]">↓</span>, </span>
                <span className="text-[#c93cc9]">MA2: 162107.797<span className="text-[#e04040]">↑</span>, </span>
                <span className="text-[#2fd52f]">MA3: 126747.648<span className="text-[#e04040]">↑</span></span>
              </div>
              <div className="pointer-events-none absolute left-[732px] top-[235px] w-[340px] text-[35px] font-black leading-[48px] text-[#1e1e1e]">
                六国化工股票 六国化工股票行情
              </div>
            </div>

            <Profile />
          </div>
        </div>

        {/* right panel */}
        <div className="flex min-w-0 flex-1 flex-col border-l border-[#a5161b]">
          <div className="flex h-[24px] shrink-0 items-center border-y border-[#b01c20]">
            <span className="flex h-full w-[11px] items-start justify-center bg-[#f0b050] font-['Liberation_Sans',sans-serif] text-[11px] font-bold leading-[12px] text-[#c02020]">R</span>
            <span className={`ml-[1px] text-[19px] font-bold leading-none tracking-[-0.6px] text-[#55dcf5] ${mono}`}>600470</span>
            <span className="ml-[3px] text-[17px] leading-none text-[#f0f060]">六国化工</span>
          </div>
          <div className="flex h-[418px] shrink-0 flex-col overflow-hidden">
            <div className="flex h-[209px] shrink-0 flex-col border-b border-[#a5161b]">
              {asks.map((r, i) => <BookRow key={r[0]} r={r} arrow={i === 0 ? "u" : undefined} />)}
            </div>
            {bids.map((r, i) => <BookRow key={r[0]} r={r} arrow={i === 9 ? "d" : undefined} />)}
          </div>
          <div className="flex h-[22px] shrink-0 items-center border-y border-[#8e1518] bg-[#353535] text-[13px] text-[#a8a8a8]">
            <span className="w-[137px] pl-[28px] text-center">分时成交</span>
            <span className="flex h-full w-[20px] items-center justify-center border-x border-[#8e1518]">
              <svg width={7} height={11} viewBox="0 0 7 11"><path d="M0 0l7 5.5L0 11z" fill="#9a9a9a" /></svg>
            </span>
            <span className="flex-1 text-center">细</span>
          </div>
          <div className="flex min-h-0 flex-1 overflow-hidden">
            <div className="flex w-[168px] shrink-0 flex-col border-r border-[#8e1518] pt-[1px]">
              {trades.map((r, i) => (
                <div key={i} className={`flex h-[21px] shrink-0 items-center pl-[3px] ${mono} ${i === 0 ? "border-b border-dotted border-[#8e1518]" : ""}`}>
                  <span className={`w-[35px] text-right ${r.big ? "text-[13.5px] font-bold tracking-[-0.5px] text-[#c8c8c8]" : "text-[12px] text-[#9a9a9a]"}`}>{r.t}</span>
                  <span className="ml-[18px] w-[27px]"><Price p={r.p} /></span>
                  <span className="flex w-[12px] justify-center">
                    {r.a === "d" && <svg width={9} height={10} viewBox="0 0 9 10"><path d="M3 0h3v5h3L4.5 10 0 5h3z" fill="#44e66a" /></svg>}
                    {r.a === "u" && <svg width={9} height={10} viewBox="0 0 9 10"><path d="M3 10h3V5h3L4.5 0 0 5h3z" fill="#f04a55" /></svg>}
                  </span>
                  <span className={`w-[40px] text-right text-[14.5px] font-bold ${r.g ? "text-[#55e07a]" : "text-[#e8595c]"}`}>{r.v}</span>
                  <span className="w-[30px] text-right text-[14.5px] font-bold text-[#b8b8b8]">{r.n}</span>
                </div>
              ))}
            </div>
            <div className="flex flex-1 justify-center pt-[3px]">
              <svg width={7} height={7} viewBox="0 0 7 7"><path d="M3.5 0L7 7H0z" fill="#e0e0e0" /></svg>
            </div>
          </div>
        </div>
      </div>
    </div>
  );
}

export default App;
